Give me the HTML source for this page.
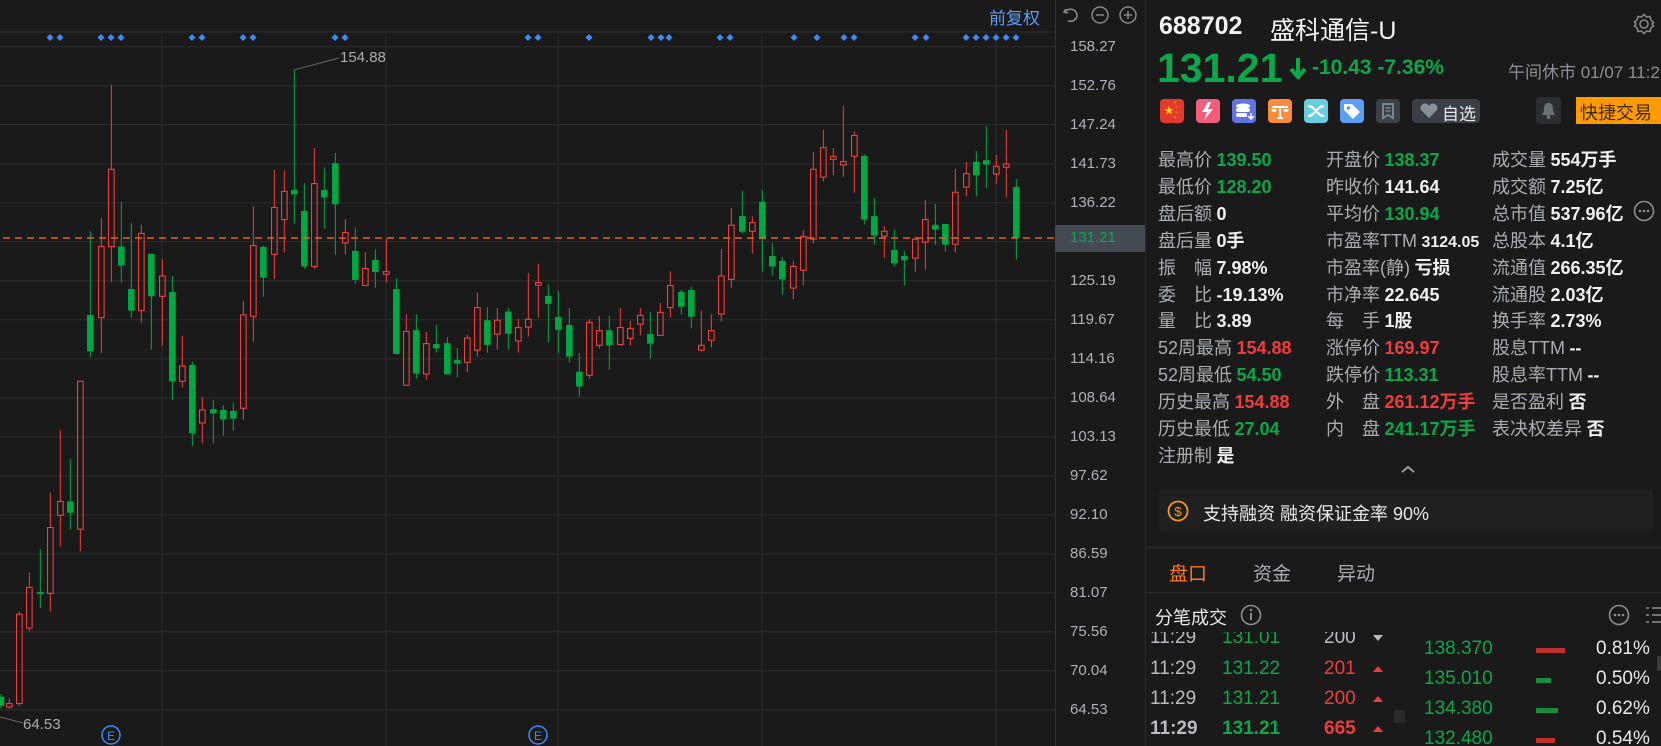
<!DOCTYPE html>
<html><head><meta charset="utf-8">
<style>
*{margin:0;padding:0;box-sizing:border-box}
body{width:1661px;height:746px;background:#1a1a1a;overflow:hidden;position:relative;font-family:"Liberation Sans","Noto Sans CJK SC",sans-serif;color:#e6e6e6}
.a{position:absolute;white-space:nowrap}
.lb{color:#a9adb2;font-size:18px}
.v{font-weight:bold;font-size:18px;color:#f0f0f0}
.g{color:#0aa84a}.r{color:#f03c3c}
.ax{position:absolute;left:1070px;font-size:15px;color:#aeb2b8;line-height:18px}
.ic{position:absolute;top:99px;width:24px;height:24px;border-radius:4px}
</style></head><body>
<svg id="ch" class="a" style="left:0;top:0" width="1146" height="746"></svg>

<div class="a" style="left:989px;top:4px;font-size:17px;color:#5d9cf5">前复权</div>
<svg class="a" style="left:1060px;top:4px" width="85" height="22">
<path d="M6 5 L4 8 L8 9 M4 8 C8 4 16 4 17 11 C17 16 12 18 8 17" fill="none" stroke="#888" stroke-width="1.6"/>
<circle cx="40" cy="11" r="8" fill="none" stroke="#888" stroke-width="1.5"/><line x1="36" y1="11" x2="44" y2="11" stroke="#888" stroke-width="1.5"/>
<circle cx="68" cy="11" r="8" fill="none" stroke="#888" stroke-width="1.5"/><line x1="64" y1="11" x2="72" y2="11" stroke="#888" stroke-width="1.5"/><line x1="68" y1="7" x2="68" y2="15" stroke="#888" stroke-width="1.5"/>
</svg>

<div id="axis"></div>
<div class="a" style="left:1055px;top:225px;width:90px;height:27px;background:#434a52"></div>
<div class="ax" style="top:229px;color:#0aa84a">131.21</div>

<div class="a" style="left:1145px;top:0;width:1px;height:746px;background:#2a2a2a"></div>

<div class="a" style="left:1159px;top:12px;font-size:25px;font-weight:bold;color:#f2f2f2">688702</div>
<div class="a" style="left:1270px;top:11px;font-size:25px;color:#f2f2f2">盛科通信-U</div>
<svg class="a" style="left:1633px;top:13px" width="22" height="22"><circle cx="11" cy="11" r="4" fill="none" stroke="#888" stroke-width="1.6"/><path d="M11 1.5 L13.5 4 L17 3.5 L18 7 L20.5 9.5 L19 11 L20.5 13 L18 15 L17 18.5 L13.5 18 L11 20.5 L8.5 18 L5 18.5 L4 15 L1.5 13 L3 11 L1.5 9 L4 7 L5 3.5 L8.5 4 Z" fill="none" stroke="#888" stroke-width="1.5"/></svg>

<div class="a g" style="left:1157px;top:45px;font-size:41px;font-weight:bold">131.21</div>
<svg class="a" style="left:1288px;top:56px" width="20" height="26"><path d="M10 2 V20 M3 13 L10 21 L17 13" fill="none" stroke="#0aa84a" stroke-width="4"/></svg>
<div class="a g" style="left:1312px;top:56px;font-size:21px;font-weight:bold">-10.43 -7.36%</div>
<div class="a" style="left:1508px;top:58px;font-size:17px;color:#8c9096">午间休市 01/07 11:29</div>

<div class="ic" style="left:1160px;background:#e23a2c"><span class="a" style="left:4px;top:3px;color:#ffd200;font-size:10px">★</span><span class="a" style="left:14px;top:2px;color:#ffd200;font-size:5px;line-height:5px">• <br>&nbsp;•<br>&nbsp;•<br>•</span></div>
<div class="ic" style="left:1196px;background:#f25d7c"><svg width="24" height="24"><path d="M12 3 L6 13 H11 L8 21 L17 10 H12 L15 3Z" fill="#fff"/></svg></div>
<div class="ic" style="left:1232px;background:#6372e2"><svg width="24" height="24"><ellipse cx="11" cy="7" rx="7" ry="2.5" fill="#fff"/><rect x="4" y="9" width="14" height="4" rx="2" fill="#fff"/><rect x="4" y="14" width="11" height="4" rx="2" fill="#fff"/><path d="M19 14 V20 M16 17 L19 20 L22 17" stroke="#fff" stroke-width="1.5" fill="none"/></svg></div>
<div class="ic" style="left:1268px;background:#fb8b3c"><svg width="24" height="24"><path d="M4 8 H20 M12 8 V19 M9 19 H15" stroke="#fff" stroke-width="2"/><path d="M3 10 H9 A3 3 0 0 1 3 10Z M15 10 H21 A3 3 0 0 1 15 10Z" fill="#fff"/></svg></div>
<div class="ic" style="left:1304px;background:#67cde0"><svg width="24" height="24"><path d="M4 7 C11 7 13 17 20 17 M4 17 C11 17 13 7 20 7" stroke="#fff" stroke-width="2.2" fill="none"/></svg></div>
<div class="ic" style="left:1340px;background:#5b9ef5"><svg width="24" height="24"><path d="M4 5 H12 L20 13 L13 20 L4 11Z" fill="#fff"/><circle cx="8.5" cy="9" r="1.8" fill="#5b9ef5"/></svg></div>
<div class="ic" style="left:1376px;background:#3c4147"><svg width="24" height="24"><path d="M7 5 H17 V19 L12 16 L7 19Z" fill="none" stroke="#7d848c" stroke-width="2"/><path d="M9.5 9 H14.5 M9.5 12 H14.5" stroke="#7d848c" stroke-width="1.6"/></svg></div>
<div class="a" style="left:1412px;top:99px;width:68px;height:24px;border-radius:4px;background:#3a3f45"><svg class="a" style="left:7px;top:4px" width="20" height="16"><path d="M10 15 L2 7 A4.2 4.2 0 0 1 10 3 A4.2 4.2 0 0 1 18 7Z" fill="#8a9097"/></svg><span class="a" style="left:30px;top:1px;font-size:17px;color:#e8e8e8">自选</span></div>
<div class="a" style="left:1536px;top:97px;width:25px;height:27px;border-radius:3px;background:#2c2e31"><svg width="25" height="27"><path d="M12.5 6 C8 6 8 10 8 14 L6 18 H19 L17 14 C17 10 17 6 12.5 6Z" fill="#6b7076"/><circle cx="12.5" cy="20" r="2" fill="#6b7076"/></svg></div>
<div class="a" style="left:1576px;top:97px;width:85px;height:27px;background:#ff9a00;font-size:18px;color:#3a2a10;padding:2px 0 0 4px">快捷交易</div>

<div id="stats"></div>

<svg class="a" style="left:1400px;top:464px" width="16" height="10"><path d="M2 8 L8 3 L14 8" fill="none" stroke="#9a9ea3" stroke-width="2"/></svg>
<div class="a" style="left:1159px;top:489px;width:494px;height:43px;background:#202020;border-radius:4px"></div>
<svg class="a" style="left:1167px;top:500px" width="22" height="22"><circle cx="11" cy="11" r="9.5" fill="none" stroke="#f59a1a" stroke-width="1.8"/><text x="11" y="16" text-anchor="middle" font-size="13" fill="#f59a1a" font-family="Liberation Sans">$</text></svg>
<div class="a" style="left:1203px;top:500px;font-size:18px;color:#e8e8e8">支持融资 融资保证金率 90%</div>

<div class="a" style="left:1146px;top:546px;width:515px;height:3px;background:#262626"></div>
<div class="a" style="left:1169px;top:559px;font-size:19px;color:#ff7a1a">盘口</div>
<div class="a" style="left:1253px;top:559px;font-size:19px;color:#a9adb2">资金</div>
<div class="a" style="left:1337px;top:559px;font-size:19px;color:#a9adb2">异动</div>
<div class="a" style="left:1146px;top:592px;width:515px;height:1px;background:#2c2c2c"></div>

<div class="a" style="left:1155px;top:604px;font-size:18px;color:#e8e8e8">分笔成交</div>
<svg class="a" style="left:1240px;top:604px" width="22" height="22"><circle cx="11" cy="11" r="9.5" fill="none" stroke="#8a8e93" stroke-width="1.6"/><path d="M11 9 V16" stroke="#8a8e93" stroke-width="2"/><circle cx="11" cy="6" r="1.3" fill="#8a8e93"/></svg>
<svg class="a" style="left:1608px;top:604px" width="53" height="22"><circle cx="11" cy="11" r="9.5" fill="none" stroke="#8a8e93" stroke-width="1.6"/><circle cx="7" cy="11" r="1.3" fill="#8a8e93"/><circle cx="11" cy="11" r="1.3" fill="#8a8e93"/><circle cx="15" cy="11" r="1.3" fill="#8a8e93"/><path d="M38 4 H41 M44 4 H53 M38 11 H41 M44 11 H53 M38 18 H41 M44 18 H53" stroke="#8a8e93" stroke-width="1.6"/></svg>

<div class="a" style="left:1146px;top:632px;width:510px;height:114px;overflow:hidden">
 <div id="trades"></div>
</div>
<div class="a" style="left:1394px;top:710px;width:11px;height:13px;background:#2a2a2a"></div>
<div class="a" style="left:1657px;top:656px;width:4px;height:15px;background:#3a3a3a"></div>

<script>
(function(){
var svg='';
var C1='#2a2a2a';
for(var i=0;i<18;i++){var y=46.6+i*39.02;svg+='<line x1="0" x2="1055" y1="'+y.toFixed(1)+'" y2="'+y.toFixed(1)+'" stroke="'+C1+'" stroke-width="1.2"/>';}
svg+='<line x1="0" x2="1055" y1="32" y2="32" stroke="'+C1+'" stroke-width="1.2"/>';
[162,386,558,762,996].forEach(function(x){svg+='<line x1="'+x+'" x2="'+x+'" y1="32" y2="746" stroke="'+C1+'" stroke-width="1.2"/>';});
svg+='<line x1="1055.5" x2="1055.5" y1="0" y2="746" stroke="#333" stroke-width="1"/>';
// markers
[50,60,101,111,121,192,202,243,253,335,345,528,538,589,651,661,669,720,730,794,817,844,854,915,926,966,976,986,996,1006,1016].forEach(function(x){
 svg+='<path d="M'+x+' 34 L'+(x+3.5)+' 37.5 L'+x+' 41 L'+(x-3.5)+' 37.5Z" fill="#3d8af7"/>';});
var S=2.306;function Y(z){return 60+z/S}
var G=[[0,[[3,'g',1462,1468,1490,1495],[28,'r',1472,1484,1492,1496],[58,'r',1272,1278,1484,1490],[88,'r',1182,1216,1310,1318],[121,'g',1128,1227,1231,1264],[151,'r',998,1078,1230,1272],[181,'r',853,1018,1050,1122],[211,'g',920,1018,1044,1083],[241,'r',741,741,1082,1133],[271,'g',395,588,672,684],[304,'r',365,430,594,676],[334,'r',58,252,430,512],[364,'g',327,430,474,514],[394,'g',376,528,578,594],[424,'r',380,400,578,606],[454,'g',447,447,545,668],[487,'r',459,498,545,659],[517,'g',498,535,741,784],[547,'r',636,706,741,755],[577,'g',696,703,861,891],[607,'r',777,807,837,884],[640,'g',784,805,815,884],[670,'g',796,807,829,866],[700,'g',790,809,827,855],[730,'r',556,588,803,829],[760,'r',337,428,591,650],[790,'g',428,431,502,546],[823,'r',254,340,448,505],[853,'r',254,303,368,444],[883,'g',24,300,310,377],[913,'g',284,348,476,481],[943,'r',203,285,476,481],[973,'g',247,300,317,389],[1006,'g',214,238,333,449],[1036,'r',367,398,422,449],[1066,'g',386,440,507,516]]],
[350,[[46,'r',443,481,520,520],[76,'g',437,461,489,525],[109,'r',411,488,494,513],[139,'g',503,528,678,679],[169,'r',586,626,750,750],[199,'g',586,623,723,735],[229,'r',627,654,724,737],[259,'g',611,655,665,675],[292,'g',639,653,725,725],[322,'g',664,692,700,732],[352,'r',633,641,697,720],[382,'r',537,571,669,684],[412,'g',570,600,657,675],[442,'r',572,600,632,668],[475,'g',572,580,631,668],[505,'r',597,617,648,675],[535,'r',491,598,616,638],[565,'r',470,513,519,594],[595,'g',517,544,562,652],[625,'g',533,593,622,677],[658,'g',572,611,684,698],[688,'g',676,719,753,776],[718,'r',598,605,727,735],[748,'r',590,624,658,665],[778,'g',590,623,658,714],[811,'r',572,617,656,658],[841,'r',602,619,642,658],[871,'r',572,589,609,635],[901,'g',581,632,654,688],[931,'r',560,582,635,635],[961,'r',487,520,571,594],[994,'g',530,535,569,587],[1024,'g',522,530,592,619],[1054,'r',579,658,669,672]]],
[700,[[34,'r',586,624,646,663],[64,'r',436,498,586,603],[94,'r',341,381,506,525],[127,'g',302,360,396,400],[157,'r',360,375,395,446],[187,'g',300,327,413,488],[217,'g',422,452,476,497],[247,'g',454,463,506,541],[280,'r',463,476,526,551],[310,'r',392,407,485,520],[340,'r',212,252,413,423],[370,'r',161,202,270,280],[400,'r',203,222,229,266],[430,'r',106,234,242,269],[463,'r',164,174,222,306],[493,'g',218,221,368,379],[523,'g',318,360,405,426],[553,'r',383,395,406,456],[583,'g',390,438,469,476],[613,'g',440,452,462,520],[646,'r',410,413,457,488],[676,'r',323,368,420,483],[706,'g',332,380,391,426],[736,'g',378,378,426,442],[766,'r',251,305,425,444],[799,'r',235,262,293,315],[829,'g',210,235,266,315],[859,'g',152,231,241,296],[889,'r',219,245,263,285],[919,'r',161,240,247,317],[949,'g',274,293,410,460]]]];
G.forEach(function(gr){var off=gr[0];gr[1].forEach(function(c){
 var x=c[0]/3+off,wt=Y(c[2]),bt=Y(c[3]),bb=Y(c[4]),wb=Y(c[5]);
 if(c[1]=='g'){var col='#00a843';
  svg+='<line x1="'+x+'" x2="'+x+'" y1="'+wt+'" y2="'+wb+'" stroke="'+col+'" stroke-width="1"/>';
  svg+='<rect x="'+(x-3.3)+'" y="'+bt+'" width="6.6" height="'+Math.max(bb-bt,1.5)+'" fill="'+col+'"/>';
 }else{var col='#f23e3e';
  svg+='<line x1="'+x+'" x2="'+x+'" y1="'+wt+'" y2="'+bt+'" stroke="'+col+'" stroke-width="1"/>';
  svg+='<line x1="'+x+'" x2="'+x+'" y1="'+bb+'" y2="'+wb+'" stroke="'+col+'" stroke-width="1"/>';
  svg+='<rect x="'+(x-2.8)+'" y="'+bt+'" width="5.6" height="'+Math.max(bb-bt,1.5)+'" fill="none" stroke="'+col+'" stroke-width="1.1"/>';
 }});});
svg+='<line x1="3" x2="1055" y1="238" y2="238" stroke="#e8620e" stroke-width="1.4" stroke-dasharray="7,5"/>';
svg+='<path d="M294 70 L339 58" stroke="#666" stroke-width="1"/>';
svg+='<text x="340" y="62" font-size="15" fill="#a9adb2" font-family="Liberation Sans">154.88</text>';
svg+='<path d="M0 717 L23 723" stroke="#666" stroke-width="1"/>';
svg+='<text x="23" y="729" font-size="15" fill="#a9adb2" font-family="Liberation Sans">64.53</text>';
[111,538].forEach(function(x){svg+='<circle cx="'+x+'" cy="735" r="9" fill="none" stroke="#3d8af7" stroke-width="1.5"/><text x="'+x+'" y="740" text-anchor="middle" font-size="12" fill="#3d8af7" font-family="Liberation Sans">E</text>';});
document.getElementById('ch').innerHTML=svg;
var labs=['158.27','152.76','147.24','141.73','136.22','','125.19','119.67','114.16','108.64','103.13','97.62','92.10','86.59','81.07','75.56','70.04','64.53'];
var h='';labs.forEach(function(l,i){if(l)h+='<div class="ax" style="top:'+(46.6+i*39.02-9).toFixed(1)+'px">'+l+'</div>';});
document.getElementById('axis').innerHTML=h;
var rows=[
[['最高价','139.50','g'],['开盘价','138.37','g'],['成交量','554万手','']],
[['最低价','128.20','g'],['昨收价','141.64',''],['成交额','7.25亿','']],
[['盘后额','0',''],['平均价','130.94','g'],['总市值','537.96亿','']],
[['盘后量','0手',''],['市盈率TTM','3124.05','s'],['总股本','4.1亿','']],
[['振　幅','7.98%',''],['市盈率(静)','亏损',''],['流通值','266.35亿','']],
[['委　比','-19.13%',''],['市净率','22.645',''],['流通股','2.03亿','']],
[['量　比','3.89',''],['每　手','1股',''],['换手率','2.73%','']],
[['52周最高','154.88','r'],['涨停价','169.97','r'],['股息TTM','--','']],
[['52周最低','54.50','g'],['跌停价','113.31','g'],['股息率TTM','--','']],
[['历史最高','154.88','r'],['外　盘','261.12万手','r'],['是否盈利','否','']],
[['历史最低','27.04','g'],['内　盘','241.17万手','g'],['表决权差异','否','']],
[['注册制','是','']]];
var cx=[1158,1326,1492];h='';
rows.forEach(function(r,i){var y=146+i*26.9;r.forEach(function(c,j){
 var st=c[2]=='s'?'font-size:16px;':'';var cl=(c[2]=='g'||c[2]=='r')?c[2]:'';
 h+='<div class="a" style="left:'+cx[j]+'px;top:'+y.toFixed(1)+'px"><span class="lb">'+c[0]+'</span> <span class="v '+cl+'" style="'+st+'">'+c[1]+'</span></div>';});});
h+='<svg class="a" style="left:1633px;top:200px" width="22" height="22"><circle cx="11" cy="11" r="9.5" fill="none" stroke="#8a8e93" stroke-width="1.6"/><circle cx="7" cy="11" r="1.3" fill="#8a8e93"/><circle cx="11" cy="11" r="1.3" fill="#8a8e93"/><circle cx="15" cy="11" r="1.3" fill="#8a8e93"/></svg>';
document.getElementById('stats').innerHTML=h;
var t=[['11:29','131.01','200','d',-5],['11:29','131.22','201','u',26],['11:29','131.21','200','u',56],['11:29','131.21','665','u',86,1]];
h='';t.forEach(function(r){var w=r[5]?'font-weight:bold;':'';
 h+='<div class="a" style="top:'+r[4]+'px;left:4px;font-size:19px;color:#b8bcc2;'+w+'">'+r[0]+'</div>';
 h+='<div class="a g" style="top:'+r[4]+'px;left:76px;font-size:19px;'+w+'">'+r[1]+'</div>';
 h+='<div class="a" style="top:'+r[4]+'px;left:178px;font-size:19px;color:'+(r[3]=='d'?'#b8bcc2':'#f03c3c')+';'+w+'">'+r[2]+'</div>';
 h+='<div class="a" style="top:'+(r[4]+8)+'px;left:227px;width:0;height:0;border-left:5px solid transparent;border-right:5px solid transparent;'+(r[3]=='d'?'border-top:6px solid #b8bcc2':'border-bottom:6px solid #f03c3c')+'"></div>';});
var b=[['138.370','#c0302f',29,'0.81%',6],['135.010','#1b8c3f',15,'0.50%',36],['134.380','#1b8c3f',22,'0.62%',66],['132.480','#c0302f',19,'0.54%',96]];
b.forEach(function(r){
 h+='<div class="a g" style="top:'+r[4]+'px;left:278px;font-size:19px">'+r[0]+'</div>';
 h+='<div class="a" style="top:'+(r[4]+10)+'px;left:390px;width:'+r[2]+'px;height:5px;background:'+r[1]+'"></div>';
 h+='<div class="a" style="top:'+r[4]+'px;left:450px;font-size:19px;color:#e8e8e8">'+r[3]+'</div>';});
document.getElementById('trades').innerHTML=h;
})();
</script>
</body></html>
